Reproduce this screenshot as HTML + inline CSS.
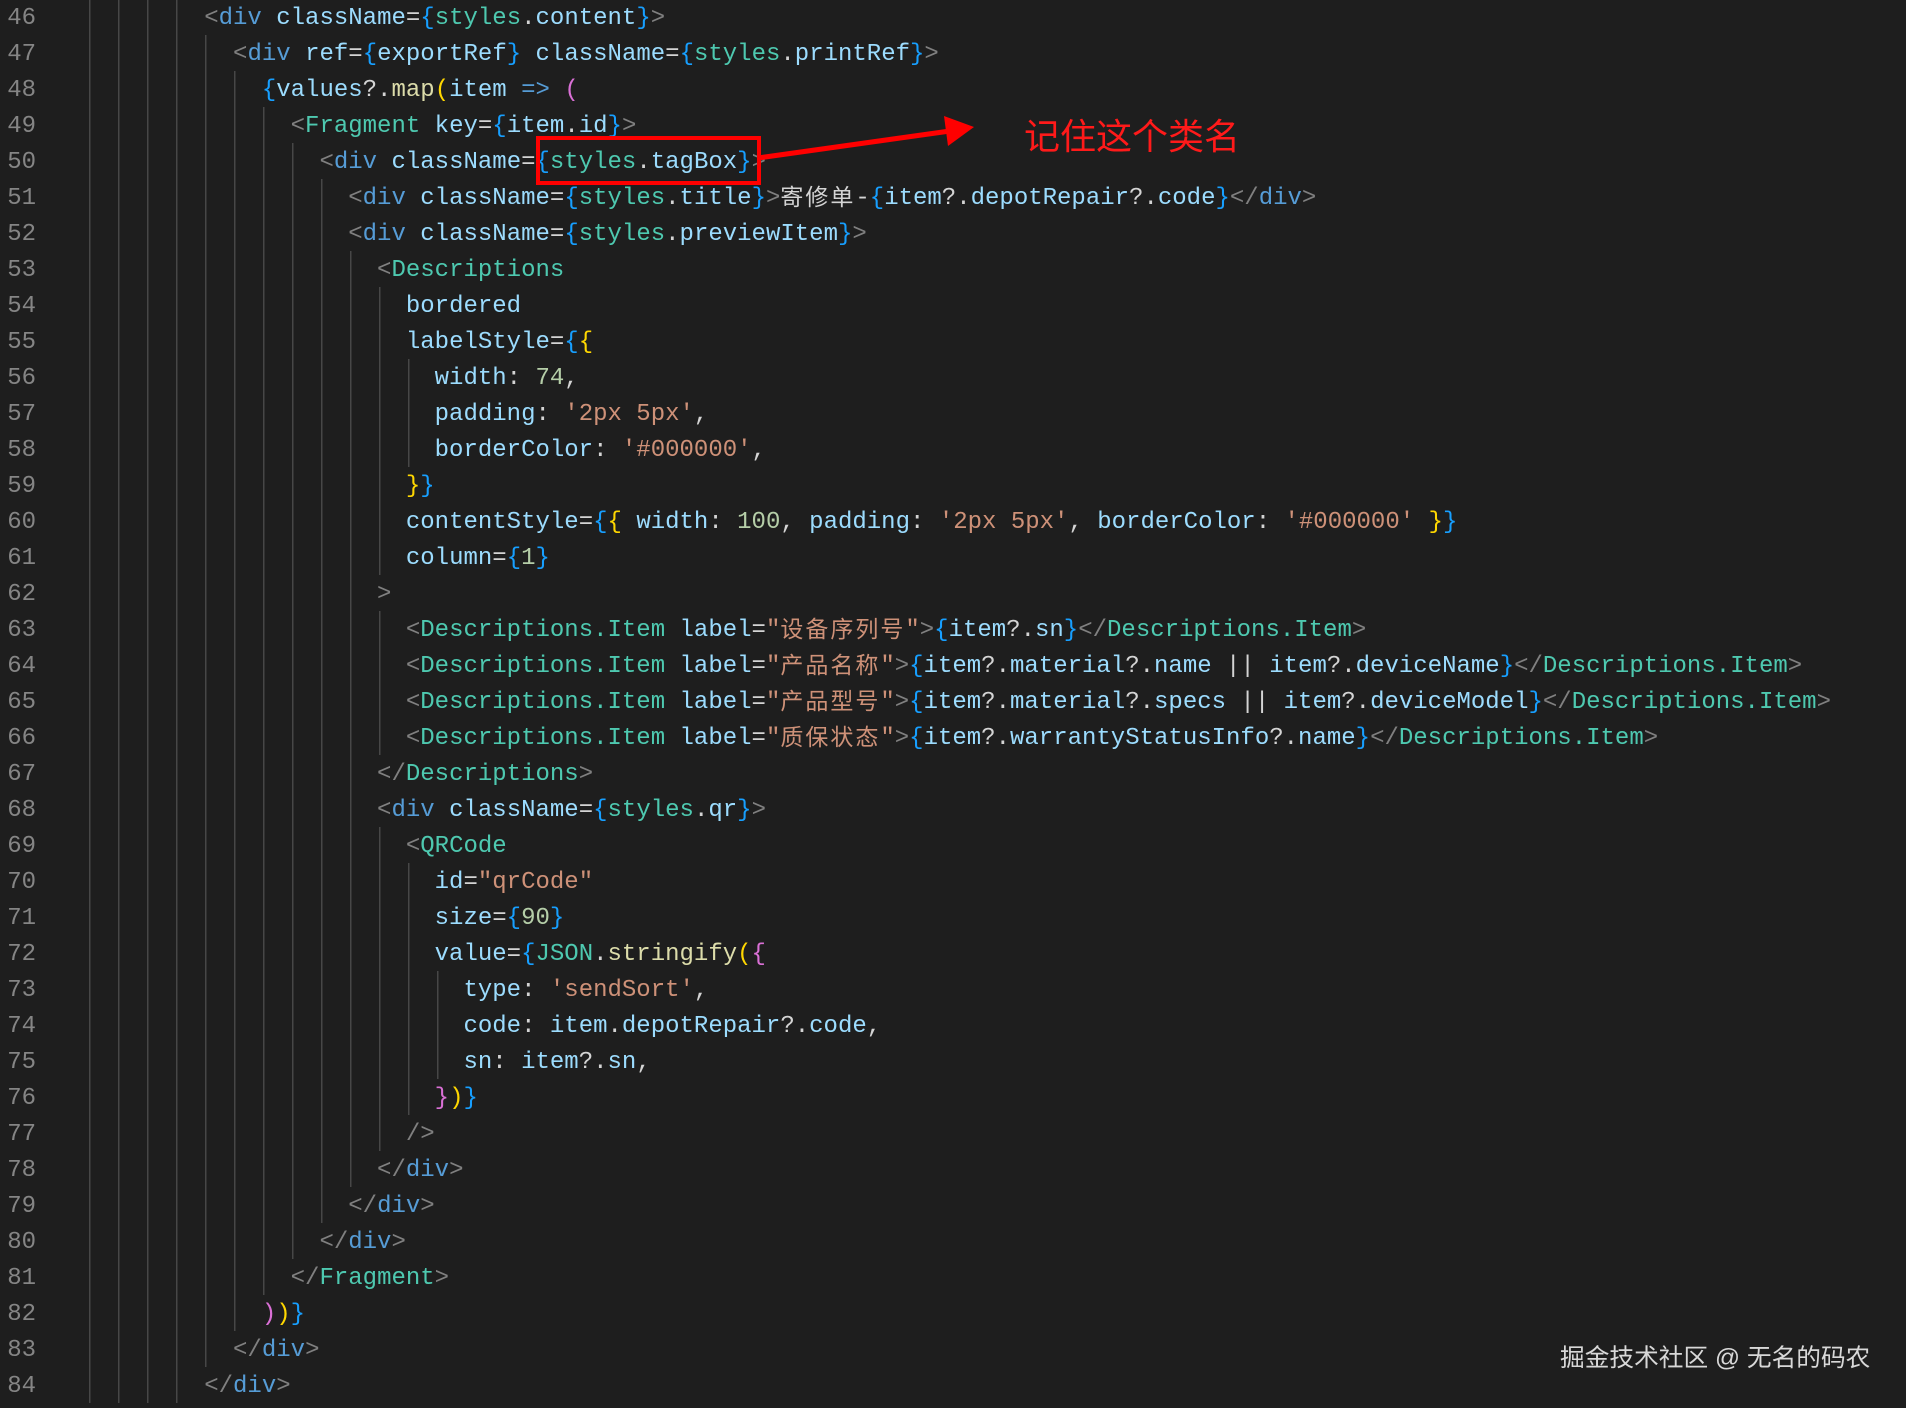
<!DOCTYPE html>
<html><head><meta charset="utf-8"><style>
html,body{margin:0;padding:0;background:#1e1e1e;width:1906px;height:1408px;overflow:hidden}
.l{position:absolute;left:0;height:36px;width:1906px;font-family:"Liberation Mono",monospace;font-size:24px;line-height:36px;white-space:pre;color:#d4d4d4}
.ln{position:absolute;left:0;width:36px;text-align:right;color:#858585}
.g{position:absolute;left:89px;top:0;height:36px;background:repeating-linear-gradient(to right,#474747 0 1.5px,transparent 1.5px 29px)}
.code{position:absolute;left:89px;top:0;height:36px}
.p{color:#808080}.t{color:#569cd6}.c{color:#4ec9b0}.a{color:#9cdcfe}.b{color:#179fff}.s{color:#ce9178}.n{color:#b5cea8}.f{color:#dcdcaa}.y{color:#ffd700}.m{color:#da70d6}
.k{display:inline-block;height:36px;line-height:36px;vertical-align:top;position:relative;top:-4px;letter-spacing:2px;font-family:"Noto Sans CJK SC",sans-serif;font-size:23px}
</style></head><body>
<div id="w"></div>
<script>
const L=[
[4,'<span class=p>&lt;</span><span class=t>div</span> <span class=a>className</span>=<span class=b>{</span><span class=c>styles</span>.<span class=a>content</span><span class=b>}</span><span class=p>&gt;</span>'],
[5,'<span class=p>&lt;</span><span class=t>div</span> <span class=a>ref</span>=<span class=b>{</span><span class=a>exportRef</span><span class=b>}</span> <span class=a>className</span>=<span class=b>{</span><span class=c>styles</span>.<span class=a>printRef</span><span class=b>}</span><span class=p>&gt;</span>'],
[6,'<span class=b>{</span><span class=a>values</span>?.<span class=f>map</span><span class=y>(</span><span class=a>item</span> <span class=t>=&gt;</span> <span class=m>(</span>'],
[7,'<span class=p>&lt;</span><span class=c>Fragment</span> <span class=a>key</span>=<span class=b>{</span><span class=a>item</span>.<span class=a>id</span><span class=b>}</span><span class=p>&gt;</span>'],
[8,'<span class=p>&lt;</span><span class=t>div</span> <span class=a>className</span>=<span class=b>{</span><span class=c>styles</span>.<span class=a>tagBox</span><span class=b>}</span><span class=p>&gt;</span>'],
[9,'<span class=p>&lt;</span><span class=t>div</span> <span class=a>className</span>=<span class=b>{</span><span class=c>styles</span>.<span class=a>title</span><span class=b>}</span><span class=p>&gt;</span><span class=k>寄修单</span>-<span class=b>{</span><span class=a>item</span>?.<span class=a>depotRepair</span>?.<span class=a>code</span><span class=b>}</span><span class=p>&lt;/</span><span class=t>div</span><span class=p>&gt;</span>'],
[9,'<span class=p>&lt;</span><span class=t>div</span> <span class=a>className</span>=<span class=b>{</span><span class=c>styles</span>.<span class=a>previewItem</span><span class=b>}</span><span class=p>&gt;</span>'],
[10,'<span class=p>&lt;</span><span class=c>Descriptions</span>'],
[11,'<span class=a>bordered</span>'],
[11,'<span class=a>labelStyle</span>=<span class=b>{</span><span class=y>{</span>'],
[12,'<span class=a>width</span>: <span class=n>74</span>,'],
[12,'<span class=a>padding</span>: <span class=s>\'2px 5px\'</span>,'],
[12,'<span class=a>borderColor</span>: <span class=s>\'#000000\'</span>,'],
[11,'<span class=y>}</span><span class=b>}</span>'],
[11,'<span class=a>contentStyle</span>=<span class=b>{</span><span class=y>{</span> <span class=a>width</span>: <span class=n>100</span>, <span class=a>padding</span>: <span class=s>\'2px 5px\'</span>, <span class=a>borderColor</span>: <span class=s>\'#000000\'</span> <span class=y>}</span><span class=b>}</span>'],
[11,'<span class=a>column</span>=<span class=b>{</span><span class=n>1</span><span class=b>}</span>'],
[10,'<span class=p>&gt;</span>'],
[11,'<span class=p>&lt;</span><span class=c>Descriptions.Item</span> <span class=a>label</span>=<span class=s>"<span class=k>设备序列号</span>"</span><span class=p>&gt;</span><span class=b>{</span><span class=a>item</span>?.<span class=a>sn</span><span class=b>}</span><span class=p>&lt;/</span><span class=c>Descriptions.Item</span><span class=p>&gt;</span>'],
[11,'<span class=p>&lt;</span><span class=c>Descriptions.Item</span> <span class=a>label</span>=<span class=s>"<span class=k>产品名称</span>"</span><span class=p>&gt;</span><span class=b>{</span><span class=a>item</span>?.<span class=a>material</span>?.<span class=a>name</span> || <span class=a>item</span>?.<span class=a>deviceName</span><span class=b>}</span><span class=p>&lt;/</span><span class=c>Descriptions.Item</span><span class=p>&gt;</span>'],
[11,'<span class=p>&lt;</span><span class=c>Descriptions.Item</span> <span class=a>label</span>=<span class=s>"<span class=k>产品型号</span>"</span><span class=p>&gt;</span><span class=b>{</span><span class=a>item</span>?.<span class=a>material</span>?.<span class=a>specs</span> || <span class=a>item</span>?.<span class=a>deviceModel</span><span class=b>}</span><span class=p>&lt;/</span><span class=c>Descriptions.Item</span><span class=p>&gt;</span>'],
[11,'<span class=p>&lt;</span><span class=c>Descriptions.Item</span> <span class=a>label</span>=<span class=s>"<span class=k>质保状态</span>"</span><span class=p>&gt;</span><span class=b>{</span><span class=a>item</span>?.<span class=a>warrantyStatusInfo</span>?.<span class=a>name</span><span class=b>}</span><span class=p>&lt;/</span><span class=c>Descriptions.Item</span><span class=p>&gt;</span>'],
[10,'<span class=p>&lt;/</span><span class=c>Descriptions</span><span class=p>&gt;</span>'],
[10,'<span class=p>&lt;</span><span class=t>div</span> <span class=a>className</span>=<span class=b>{</span><span class=c>styles</span>.<span class=a>qr</span><span class=b>}</span><span class=p>&gt;</span>'],
[11,'<span class=p>&lt;</span><span class=c>QRCode</span>'],
[12,'<span class=a>id</span>=<span class=s>"qrCode"</span>'],
[12,'<span class=a>size</span>=<span class=b>{</span><span class=n>90</span><span class=b>}</span>'],
[12,'<span class=a>value</span>=<span class=b>{</span><span class=c>JSON</span>.<span class=f>stringify</span><span class=y>(</span><span class=m>{</span>'],
[13,'<span class=a>type</span>: <span class=s>\'sendSort\'</span>,'],
[13,'<span class=a>code</span>: <span class=a>item</span>.<span class=a>depotRepair</span>?.<span class=a>code</span>,'],
[13,'<span class=a>sn</span>: <span class=a>item</span>?.<span class=a>sn</span>,'],
[12,'<span class=m>}</span><span class=y>)</span><span class=b>}</span>'],
[11,'<span class=p>/&gt;</span>'],
[10,'<span class=p>&lt;/</span><span class=t>div</span><span class=p>&gt;</span>'],
[9,'<span class=p>&lt;/</span><span class=t>div</span><span class=p>&gt;</span>'],
[8,'<span class=p>&lt;/</span><span class=t>div</span><span class=p>&gt;</span>'],
[7,'<span class=p>&lt;/</span><span class=c>Fragment</span><span class=p>&gt;</span>'],
[6,'<span class=m>)</span><span class=y>)</span><span class=b>}</span>'],
[5,'<span class=p>&lt;/</span><span class=t>div</span><span class=p>&gt;</span>'],
[4,'<span class=p>&lt;/</span><span class=t>div</span><span class=p>&gt;</span>']
];
let h='';
L.forEach((x,i)=>{h+=`<div class="l" style="top:${1+i*36}px"><span class="ln">${46+i}</span><span class="g" style="width:${x[0]*29}px;top:-2px"></span><span class="code">${' '.repeat(x[0]*2)}${x[1]}</span></div>`});
document.getElementById('w').innerHTML=h;
</script>
<div style="position:absolute;left:536px;top:136px;width:225px;height:49px;border:4px solid #ff0000;box-sizing:border-box"></div>
<svg style="position:absolute;left:0;top:0" width="1906" height="300">
<line x1="758" y1="158" x2="950" y2="131" stroke="#ff0000" stroke-width="5"/>
<polygon points="974,127 944,116 948,146" fill="#ff0000"/>
</svg>
<div style="position:absolute;left:1024px;top:110px;font-family:'Noto Sans CJK SC',sans-serif;font-size:36px;line-height:48px;color:#ff1a1a">记住这个类名</div>
<div style="position:absolute;left:1560px;top:1342px;font-family:'Liberation Sans','Noto Sans CJK SC',sans-serif;font-size:24.7px;line-height:34px;color:#d8d8d8">掘金技术社区 @ 无名的码农</div>
</body></html>
